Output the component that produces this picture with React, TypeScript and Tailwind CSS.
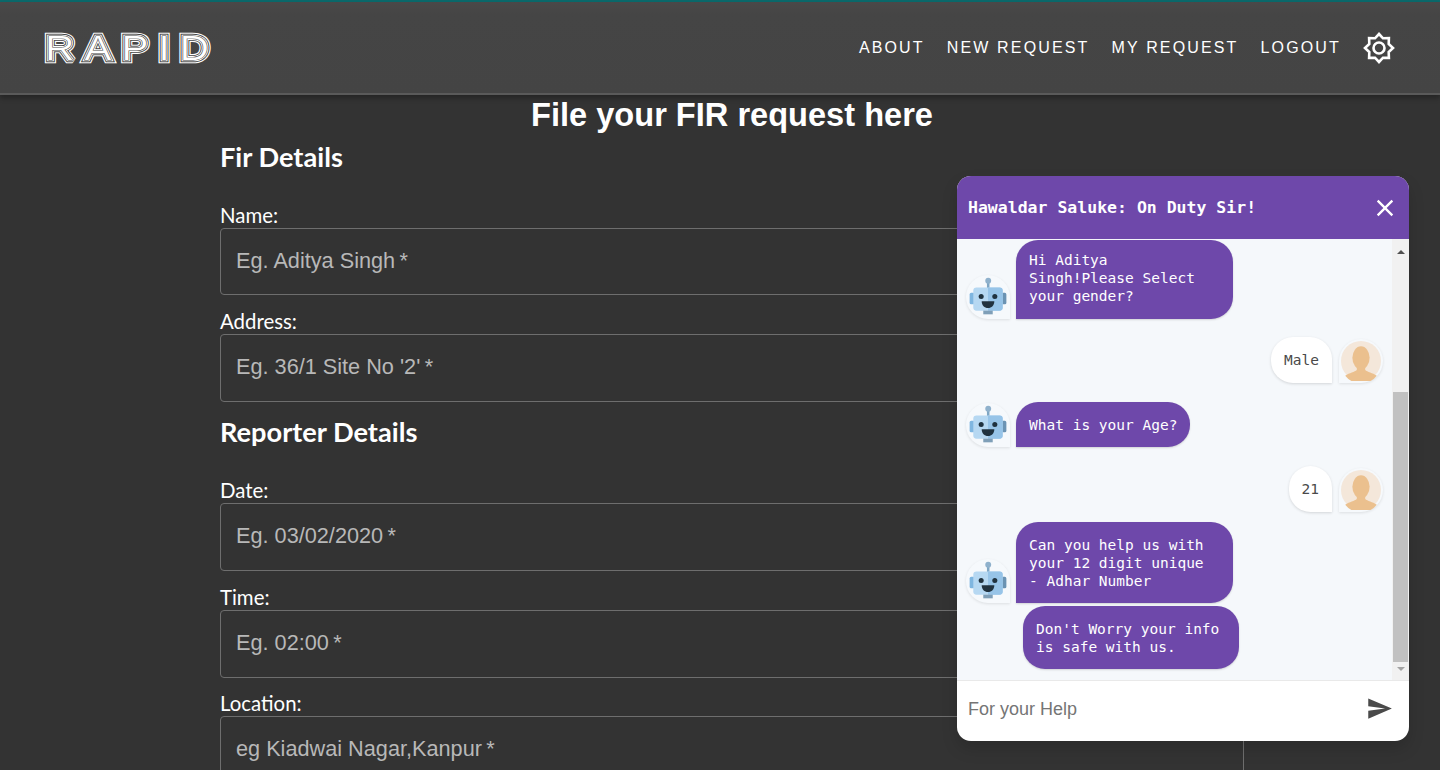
const PURPLE_BUBBLE = "bg-[#6e48aa] text-white shadow-[0_1px_2px_rgba(0,0,0,0.15)]"

const RapidLogo = () => (
  <svg width="176" height="40" viewBox="0 0 176 40" className="block" aria-label="RAPID">
    <defs>
      <text
        id="rapid-word"
        x="3"
        y="32"
        fontFamily="'Liberation Sans', sans-serif"
        fontSize="36"
        letterSpacing="9"
        strokeLinejoin="miter"
        strokeMiterlimit="2"
        transform="scale(1.12 1)"
      >
        RAPID
      </text>
    </defs>
    <use href="#rapid-word" fill="#fff" stroke="#fff" strokeWidth="6.6" />
    <use href="#rapid-word" fill="#444" stroke="#444" strokeWidth="4.4" />
    <use href="#rapid-word" fill="#fff" stroke="#fff" strokeWidth="2.6" />
    <use href="#rapid-word" fill="#444" stroke="#444" strokeWidth="0.8" />
    <use href="#rapid-word" fill="#fff" stroke="#444" strokeWidth="0.2" />
  </svg>
)

const SettingsIcon = () => (
  <svg width="32" height="32" viewBox="0 0 32 32" fill="none" stroke="#fff" strokeWidth="2.6">
    <path d="M16 2l4 4.300 5.900-.2-.2 5.900L30 16l-4.300 4 .2 5.900-5.900-.2-4 4.300-4-4.300-5.900.2.2-5.900L2 16l4.300-4-.2-5.900 5.900.2z" />
    <circle cx="16" cy="16" r="5.500" />
  </svg>
)

const CloseIcon = () => (
  <svg width="28" height="28" viewBox="0 0 24 24" fill="#fff">
    <path d="M19 6.41L17.59 5 12 10.59 6.41 5 5 6.41 10.59 12 5 17.59 6.41 19 12 13.41 17.59 19 19 17.59 13.41 12z" />
  </svg>
)

const SendIcon = () => (
  <svg width="27" height="27" viewBox="0 0 24 24" fill="#4a4a4a" className="-mt-[2px]">
    <path d="M2.01 21L23 12 2.01 3 2 10l15 2-15 2z" />
  </svg>
)

const BotAvatar = () => (
  <div className="w-[44px] h-[44px] shrink-0 rounded-full rounded-br-none bg-[#f6f9fc] shadow-[0_1px_3px_rgba(0,0,0,0.1)] flex items-center justify-center">
    <svg width="42" height="42" viewBox="0 0 40 40">
      <rect x="19" y="3" width="2.4" height="9" fill="#7fa6c4" />
      <circle cx="20.2" cy="4.5" r="2.8" fill="#8fb1cc" />
      <rect x="2.5" y="16" width="5" height="11" rx="1.5" fill="#7fb6e0" />
      <rect x="32.5" y="16" width="5" height="11" rx="1.5" fill="#6b93b3" />
      <rect x="6" y="11" width="28" height="22" rx="3" fill="#b6d8f2" />
      <path d="M20 11h11a3 3 0 013 3v16a3 3 0 01-3 3H20z" fill="#97c4e8" />
      <circle cx="13.5" cy="19.5" r="2.4" fill="#20323f" />
      <circle cx="26.5" cy="19.5" r="2.4" fill="#20323f" />
      <path d="M14 24h12c0 4-2.6 6.5-6 6.5S14 28 14 24z" fill="#20323f" />
      <rect x="15.5" y="33" width="9" height="3.5" fill="#7f9fb8" />
    </svg>
  </div>
)

const UserAvatar = () => (
  <div className="w-[44px] h-[44px] shrink-0 rounded-full rounded-bl-none bg-[#f6f9fc] shadow-[0_1px_3px_rgba(0,0,0,0.1)] flex items-center justify-center">
    <svg width="40" height="40" viewBox="0 0 38 38">
      <circle cx="19" cy="19" r="19" fill="#f4e7da" />
      <path d="M4 33c4-3 9-3.500 11-5.500V24h8v3.500c2 2 7 2.500 11 5.500a19 19 0 01-30 0z" fill="#ebc08e" />
      <ellipse cx="19" cy="16" rx="8.200" ry="11" fill="#ebc08e" />
    </svg>
  </div>
)

function Field({ label, placeholder, className, first }: { label: string; placeholder: string; className?: string; first?: boolean }) {
  return (
    <div className={className}>
      <div className="h-[24px] leading-[22px] text-[20.400px] text-white font-['Lato',sans-serif]">{label}</div>
      <div
        className={`${first ? "h-[67px]" : "h-[68px] pb-[1px]"} border border-[#6e6e6e] rounded-[4px] flex items-center px-[15px] text-[21.700px] text-[#b8b8b8] font-['Liberation_Sans',sans-serif]`}
      >
        {placeholder}&thinsp;*
      </div>
    </div>
  )
}

function BotMessage({ text, className }: { text: string; className?: string }) {
  return (
    <div className={`flex items-end pl-[9px] ${className ?? ""}`}>
      <BotAvatar />
      <div className={`ml-[6px] w-[217px] px-[13px] rounded-[22px] rounded-bl-none ${PURPLE_BUBBLE} ${className ? "pt-[14px] pb-[13px]" : "pt-[11px] pb-[14px]"}`}>
        {text}
      </div>
    </div>
  )
}

function UserMessage({ text, className }: { text: string; className?: string }) {
  return (
    <div className={`flex items-end justify-end pr-[9px] ${className ?? ""}`}>
      <div className="h-[46px] px-[13px] flex items-center rounded-[22px] rounded-br-none bg-white text-[#4a4a4a] shadow-[0_1px_3px_rgba(0,0,0,0.14)]">
        {text}
      </div>
      <div className="ml-[7px]">
        <UserAvatar />
      </div>
    </div>
  )
}

function ChatWindow() {
  return (
    <div className="absolute left-[957px] top-[176px] w-[452px] h-[565px] rounded-[14px] overflow-hidden bg-white flex flex-col shadow-[0_8px_16px_rgba(0,0,0,0.15)]">
      <div className="h-[63px] shrink-0 bg-[#6e48aa] flex items-center justify-between pl-[11px] pr-[10px]">
        <span className="pt-[2px] text-[16.500px] font-bold text-white font-['DejaVu_Sans_Mono',monospace]">
          Hawaldar Saluke: On Duty Sir!
        </span>
        <CloseIcon />
      </div>

      <div className="h-[442px] shrink-0 flex bg-[#f5f8fb] border-b border-[#e9e9e9]">
        <div className="w-[435px] shrink-0 pt-[1px] overflow-hidden text-[14.500px] leading-[18px] font-['DejaVu_Sans_Mono',monospace]">
          <BotMessage text="Hi Aditya Singh!Please Select your gender?" />
          <UserMessage text="Male" className="mt-[18px]" />
          <div className="flex items-end pl-[9px] mt-[19px]">
            <BotAvatar />
            <div className={`ml-[6px] h-[45px] px-[13px] flex items-center rounded-[22px] rounded-bl-none ${PURPLE_BUBBLE}`}>
              What is your Age?
            </div>
          </div>
          <UserMessage text="21" className="mt-[19px]" />
          <BotMessage text="Can you help us with your 12 digit unique - Adhar Number" className="mt-[10px]" />
          <div className={`ml-[66px] mt-[3px] w-[216px] px-[13px] pt-[14px] pb-[13px] rounded-[22px] ${PURPLE_BUBBLE}`}>
            Don't Worry your info is safe with us.
          </div>
        </div>

        {/* scrollbar */}
        <div className="w-[17px] shrink-0 bg-[#f1f1f1] flex flex-col items-center">
          <div className="h-[26px] shrink-0 flex items-center justify-center">
            <div className="w-0 h-0 border-x-[4px] border-x-transparent border-b-[4px] border-b-[#505050]" />
          </div>
          <div className="h-[127px] shrink-0" />
          <div className="w-full h-[270px] shrink-0 px-[1px]">
            <div className="w-full h-full bg-[#c1c1c1]" />
          </div>
          <div className="flex-1 pb-[4px] flex items-center justify-center">
            <div className="w-0 h-0 border-x-[4px] border-x-transparent border-t-[4px] border-t-[#a3a3a3]" />
          </div>
        </div>
      </div>

      <div className="flex-1 pb-[4px] flex items-center justify-between pl-[11px] pr-[16px]">
        <span className="text-[18px] text-[#757575] font-['Liberation_Sans',sans-serif]">For your Help</span>
        <SendIcon />
      </div>
    </div>
  )
}

export default function App() {
  return (
    <div className="relative h-[770px] overflow-hidden bg-[#333333]">
      <div className="h-[2px] bg-[#0b6a6c]" />
      <nav className="h-[93px] flex items-center justify-between pl-[42px] pr-[45px] bg-[linear-gradient(#4a4848_0%,#454545_14%,#444444_100%)] border-b-[2px] border-[#5a5a5a] shadow-[0_3px_5px_rgba(0,0,0,0.3)] font-['Liberation_Sans',sans-serif]">
        <RapidLogo />
        <div className="flex items-center gap-[22px] text-[16px] tracking-[2.150px] text-white">
          <a className="pt-[1px]">ABOUT</a>
          <a className="pt-[1px]">NEW REQUEST</a>
          <a className="pt-[1px]">MY REQUEST</a>
          <a className="pt-[1px]">LOGOUT</a>
          <SettingsIcon />
        </div>
      </nav>

      <main className="ml-[220px] w-[1024px] mt-[2px]">
        <h1 className="h-[36px] leading-[36px] text-center text-[32.600px] font-bold text-white font-['Liberation_Sans',sans-serif]">
          File your FIR request here
        </h1>
        <h2 className="mt-[6px] h-[36px] leading-[36px] text-[27.200px] font-bold text-white font-['Lato',sans-serif]">
          Fir Details
        </h2>
        <Field first label="Name:" placeholder="Eg. Aditya Singh" className="mt-[29px]" />
        <Field label="Address:" placeholder="Eg. 36/1 Site No '2'" className="mt-[15px]" />
        <h2 className="mt-[12px] h-[36px] leading-[36px] text-[27.200px] font-bold text-white font-['Lato',sans-serif]">
          Reporter Details
        </h2>
        <Field label="Date:" placeholder="Eg. 03/02/2020" className="mt-[29px]" />
        <Field label="Time:" placeholder="Eg. 02:00" className="mt-[15px]" />
        <Field label="Location:" placeholder="eg Kiadwai Nagar,Kanpur" className="mt-[14px]" />
      </main>

      <ChatWindow />
    </div>
  )
}
